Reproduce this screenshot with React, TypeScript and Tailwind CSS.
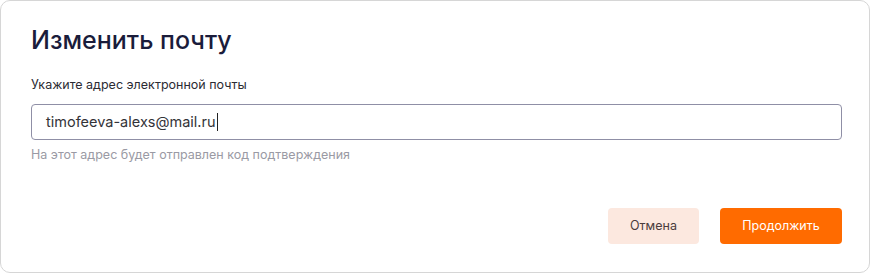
export default function App() {
  return (
    <div className="w-[871px] h-[274px] bg-white" style={{ fontFamily: 'Inter, "Noto Sans", sans-serif' }}>
      <div className="w-[870px] h-[273px] border border-[#d6d6d6] rounded-[10px] bg-white pl-[30px] pr-[27px] pt-[24px] flex flex-col">
        <h2 className="text-[25px] leading-[30px] font-medium text-[#1a1c3b]">
          Изменить почту
        </h2>
        <label className="mt-[22px] text-[12.5px] leading-[16px] text-[#2b2b33]">
          Укажите адрес электронной почты
        </label>
        <div className="mt-[11px] h-[36px] border border-[#8f8fa6] rounded-[4px] flex items-center pl-[14px] text-[14.5px] text-[#333338]">
          <span>timofeeva-alexs@mail.ru</span>
          <span className="w-px h-[18px] bg-[#222] ml-[1px]" />
        </div>
        <p className="mt-[7px] text-[12.5px] leading-[16px] text-[#9a9aa4]">
          На этот адрес будет отправлен код подтверждения
        </p>
        <div className="mt-[45px] flex justify-end gap-[21px]">
          <button className="w-[91px] h-[36px] rounded-[4px] bg-[#fce8df] text-[12.5px] text-[#4a3c3c]">
            Отмена
          </button>
          <button className="w-[122px] h-[36px] rounded-[4px] bg-[#ff6b00] text-[12.5px] text-white">
            Продолжить
          </button>
        </div>
      </div>
    </div>
  )
}
